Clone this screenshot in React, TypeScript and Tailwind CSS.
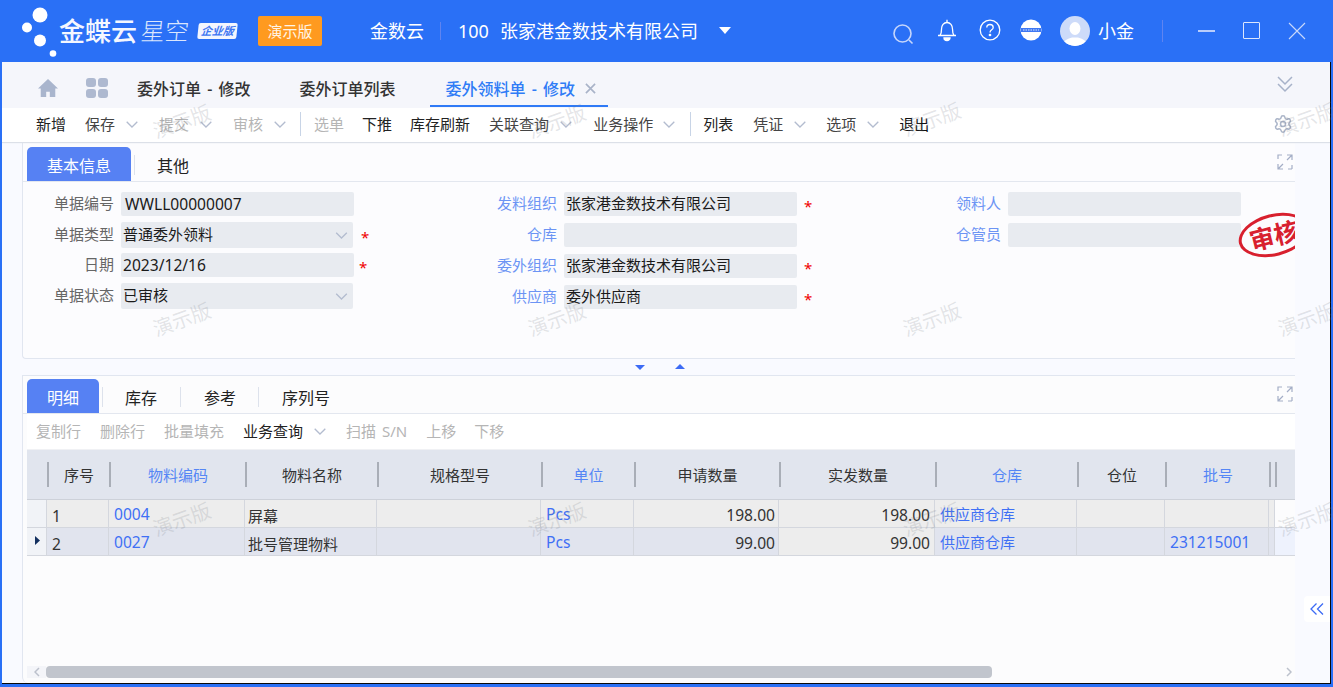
import React from "react";
import { Settings } from "lucide-react";

const FONT = "font-['Noto_Sans','Noto_Sans_CJK_SC',sans-serif]";
const GRID = "grid grid-cols-[20px_62px_136px_132px_164px_93px_145px_156px_142px_88px_104px_6px_20px]";
const LATIN = "text-[15.6px]";

function Chevron({ className = "" }: { className?: string }) {
  return (
    <svg viewBox="0 0 12 7" className={`w-[12px] h-[7px] shrink-0 ${className}`} fill="none" stroke="#b3bccf" strokeWidth="1.3">
      <polyline points="0.7,0.7 6,6 11.3,0.7" />
    </svg>
  );
}

function Expand({ className = "" }: { className?: string }) {
  return (
    <svg viewBox="0 0 16 16" className={`w-[16px] h-[16px] ${className}`} fill="none" stroke="#a3adc6" strokeWidth="1.2">
      <path d="M1 5V1h4M15 15v-4M15 15h-4" />
      <path d="M10 1h5v5M15 1l-5 5M1 10v5h5M1 15l5-5" />
    </svg>
  );
}

function Tool({ label, c = "text-[#222]", menu = false, m = "ml-[19px]", chevM = "ml-[11px]" }: { label: string; c?: string; menu?: boolean; m?: string; chevM?: string }) {
  return (
    <div className={`flex items-center shrink-0 ${m}`}>
      <span className={`text-[15px] leading-[20px] [word-spacing:2px] ${c}`}>{label}</span>
      {menu && <Chevron className={chevM} />}
    </div>
  );
}

function Field({ label, blue = false, value = "", select = false, star = false, inputX = "", h = "h-[24px]", w = "w-[233px]", starX = "ml-[7px]", top, starY = "mt-[4px]", valueCls = "text-[15px] mb-[2px]", pad = "pl-[2px]" }: { label: string; blue?: boolean; value?: string; select?: boolean; star?: boolean; inputX?: string; h?: string; w?: string; starX?: string; top: string; starY?: string; valueCls?: string; pad?: string }) {
  return (
    <div className={`flex items-center ${top}`}>
      <span className={`w-[91px] mb-[2px] text-right text-[15px] leading-[20px] shrink-0 ${blue ? "text-[#6c94f4]" : "text-[#666]"}`}>{label}</span>
      <div className={`ml-[7px] ${inputX} ${h} ${w} bg-[#e8ebf0] rounded-[2px] flex items-center justify-between ${pad} pr-[5px] shrink-0`}>
        <span className={`${valueCls} leading-[20px] text-[#1a1a1a]`}>{value}</span>
        {select && <Chevron className="w-[13px]" />}
      </div>
      {star && <span className={`${starX} ${starY} text-[15px] leading-[20px] text-[#f00000]`}>*</span>}
    </div>
  );
}

function Sep({ m = "" }: { m?: string }) {
  return <div className={`w-px h-[20px] bg-[#dde2ec] shrink-0 ${m}`} />;
}

function HeadCell({ label, blue = false }: { label?: string; blue?: boolean }) {
  return (
    <div className="relative flex items-center justify-center h-full pl-[2px]">
      <div className="absolute left-0 top-[12px] w-[2px] h-[25px] bg-[#a9aeb7]" />
      {label && <span className={`text-[15px] leading-[20px] ${blue ? "text-[#5586f5]" : "text-[#333]"}`}>{label}</span>}
    </div>
  );
}

function Cell({ children, bg = "bg-[#ededed]", c = "text-[#333]", align = "justify-start pl-[5px]", y = "pt-[5px]" }: { children?: React.ReactNode; bg?: string; c?: string; align?: string; y?: string }) {
  return (
    <div className={`flex items-center border-r border-[#d4d7de] text-[15px] leading-[20px] ${bg} ${c} ${align} ${y}`}>
      {children}
    </div>
  );
}

const MARKS = [
  "left-[152px] top-[108px]", "left-[527px] top-[108px]", "left-[902px] top-[106px]", "left-[1277px] top-[106px]",
  "left-[152px] top-[306px]", "left-[527px] top-[306px]", "left-[902px] top-[306px]", "left-[1277px] top-[306px]",
  "left-[152px] top-[506px]", "left-[527px] top-[506px]", "left-[902px] top-[506px]", "left-[1277px] top-[506px]",
];

export default function App() {
  const blue = "text-[#3f70f5]";
  const sel = "bg-[#e1e4ee]";
  const link = "pt-[1px]";
  const num = "pt-[3px]";
  const nameCol = "justify-start pl-[3px]";
  return (
    <div className={`relative w-[1333px] h-[687px] overflow-hidden flex flex-col bg-[#2a70f6] ${FONT}`}>
      {/* Title bar */}
      <header className="h-[62px] flex items-center shrink-0 text-white">
        <svg viewBox="0 0 59 62" className="w-[59px] h-[62px] shrink-0" fill="#fff">
          <circle cx="40" cy="15" r="7.5" />
          <circle cx="27" cy="27.5" r="5" />
          <circle cx="40" cy="40.5" r="6" />
          <circle cx="53" cy="53.5" r="3.3" />
        </svg>
        <span className="w-[78px] text-[26px] leading-[32px] font-medium text-[#f4f7ff] whitespace-nowrap">金蝶云</span>
        <span className="ml-[4px] w-[48px] text-[24px] leading-[32px] font-light -skew-x-6 text-[#dbe6fd] whitespace-nowrap">星空</span>
        <span className="ml-[9px] w-[39px] h-[16px] bg-[#f3f6fe] rounded-[2px] text-[#3f77f2] text-[11px] leading-[16px] font-bold italic text-center -skew-x-6 whitespace-nowrap">企业版</span>
        <div className="ml-[21px] w-[64px] h-[30px] bg-[#ff9a1f] rounded-[2px] flex items-center justify-center text-[15px] text-[#fff5e6]">演示版</div>
        <span className="ml-[48px] w-[54px] text-[18px] leading-[24px] whitespace-nowrap">金数云</span>
        <div className="ml-[16px] w-px h-[18px] bg-[#5f84f0]" />
        <span className="ml-[17px] w-[31px] text-[18px] leading-[24px]">100</span>
        <span className="ml-[11px] w-[198px] text-[18px] leading-[24px] whitespace-nowrap">张家港金数技术有限公司</span>
        <svg viewBox="0 0 12 7" className="ml-[21px] w-[12px] h-[7px] -mt-[1px]" fill="#fff"><path d="M0 0h12L6 7z" /></svg>

        <div className="flex-1" />

        <svg viewBox="0 0 24 24" className="w-[24px] h-[24px] mt-[5px]" fill="none" stroke="#c6d6fb" strokeWidth="1.6">
          <circle cx="11.5" cy="11.5" r="8.5" />
          <path d="M18 18l3.5 3.5" />
        </svg>
        <svg viewBox="0 0 22 24" className="ml-[21px] w-[22px] h-[24px] -mt-[2px]" fill="none" stroke="#fff" strokeWidth="1.3">
          <path d="M2 17.5h18M4 17.5c1.6-2 1.5-3.5 1.5-6.5 0-3.5 2.2-6.5 5.5-6.5s5.5 3 5.5 6.5c0 3 0 4.500 1.500 6.500" />
          <path d="M11 1.800v2.500" />
          <path d="M8 20h6a3 2.500 0 0 1-6 0z" fill="#fff" />
        </svg>
        <svg viewBox="0 0 22 22" className="ml-[21px] w-[22px] h-[22px] -mt-[2px]" fill="none" stroke="#fff" strokeWidth="1.3">
          <circle cx="11" cy="11" r="9.800" />
          <path d="M7.800 8.500c0-2 1.400-3 3.200-3s3.200 1.200 3.200 2.900c0 2.500-3.200 2.300-3.200 5" />
          <circle cx="11" cy="16" r="0.700" fill="#fff" />
        </svg>
        <svg viewBox="0 0 22 22" className="ml-[19px] w-[22px] h-[22px] -mt-[2px]">
          <circle cx="11" cy="11" r="10.500" fill="#fff" />
          <rect x="1" y="9" width="20" height="4" fill="#3f78f3" />
          <path d="M3 11h16" stroke="#a9c3fa" strokeWidth="1.500" strokeDasharray="1.500 1" />
        </svg>
        <svg viewBox="0 0 30 30" className="ml-[18px] w-[30px] h-[30px]">
          <clipPath id="av"><circle cx="15" cy="15" r="15" /></clipPath>
          <g clipPath="url(#av)">
            <rect width="30" height="30" fill="#cddbf9" />
            <ellipse cx="15" cy="12.500" rx="5.500" ry="6.500" fill="#fff" />
            <path d="M3 30c0-6 5-7 9-8.500h6c4 1.500 9 2.500 9 8.500z" fill="#fff" />
          </g>
        </svg>
        <span className="ml-[8px] w-[36px] text-[18px] leading-[24px] whitespace-nowrap">小金</span>
        <div className="ml-[28px] w-px h-[22px] bg-[#5f84f0]" />
        <div className="ml-[35px] w-[17px] h-[2px] bg-[#b9cdfb] -mt-[1px]" />
        <div className="ml-[28px] w-[17px] h-[17px] border border-[#dce6fd] rounded-[1px] -mt-[1px]" />
        <svg viewBox="0 0 18 18" className="ml-[28px] w-[18px] h-[18px] -mt-[1px]" fill="none" stroke="#c9d8fb" strokeWidth="1.100">
          <path d="M1 1l16 16M17 1L1 17" />
        </svg>
        <div className="w-[27px] shrink-0" />
      </header>

      {/* Window body */}
      <main className="relative ml-[2px] mr-[2px] mb-[3px] flex-1 min-h-0 flex flex-col bg-[#f9faff] border-r border-b border-[#0a0a0a] overflow-hidden">
        {/* Page tabs */}
        <div className="h-[46px] bg-[#f5f6fb] flex items-start shrink-0">
          <svg viewBox="0 0 24 22" className="ml-[35px] mt-[16px] w-[22px] h-[20px] shrink-0" fill="#a9b5cd">
            <path d="M12 1L1 11.500h3V21h6v-6h4v6h6v-9.500h3z" />
          </svg>
          <div className="ml-[27px] mt-[16px] w-[22px] h-[20px] grid grid-cols-2 gap-[2px] shrink-0">
            <div className="bg-[#aeb9d0] rounded-[3px]" />
            <div className="bg-[#aeb9d0] rounded-[3px]" />
            <div className="bg-[#aeb9d0] rounded-[3px]" />
            <div className="bg-[#aeb9d0] rounded-[3px]" />
          </div>
          <span className="ml-[29px] mt-[15px] text-[16px] leading-[24px] font-medium text-[#333] [word-spacing:2px] whitespace-nowrap">委外订单 - 修改</span>
          <span className="ml-[49px] mt-[15px] text-[16px] leading-[24px] font-medium text-[#333] whitespace-nowrap">委外订单列表</span>
          <div className="ml-[35px] w-[178px] h-[46px] border-b-[2px] border-[#2f7af6] mt-[-1px] flex items-start pl-[15px] shrink-0">
            <span className="mt-[16px] text-[16px] leading-[24px] font-medium text-[#2f7cf6] [word-spacing:2px] whitespace-nowrap">委外领料单 - 修改</span>
            <svg viewBox="0 0 12 12" className="ml-[10px] mt-[22px] w-[11px] h-[11px]" fill="none" stroke="#a9b3c8" strokeWidth="1.800">
              <path d="M1 1l10 10M11 1L1 11" />
            </svg>
          </div>
          <div className="flex-1" />
          <svg viewBox="0 0 18 18" className="mt-[13px] mr-[36px] w-[18px] h-[18px]" fill="none" stroke="#a7b2c9" strokeWidth="1.500">
            <path d="M2 2l7 7 7-7M2 9l7 7 7-7" />
          </svg>
        </div>

        {/* Toolbar */}
        <div className="h-[34px] bg-white flex items-center pl-[34px] pb-[2px] shrink-0 shadow-[0_1px_1px_#dce0e8] z-[1]">
          <Tool label="新增" m="ml-0" />
          <Tool label="保存" c="text-[#444]" menu />
          <Tool label="提交" c="text-[#b5b5b5]" menu m="ml-[21px]" />
          <Tool label="审核" c="text-[#b5b5b5]" menu m="ml-[21px]" />
          <div className="ml-[14px] w-px h-[24px] bg-[#c8d4e6]" />
          <Tool label="选单" c="text-[#b5b5b5]" m="ml-[13px]" />
          <Tool label="下推" m="ml-[18px]" />
          <Tool label="库存刷新" m="ml-[18px]" />
          <Tool label="关联查询" c="text-[#444]" menu />
          <Tool label="业务操作" c="text-[#444]" menu m="ml-[21px]" chevM="ml-[10px]" />
          <div className="ml-[15px] w-px h-[24px] bg-[#c8d4e6]" />
          <Tool label="列表" c="text-[#222]" m="ml-[12px]" />
          <Tool label="凭证" c="text-[#444]" menu m="ml-[20px]" />
          <Tool label="选项" c="text-[#444]" menu m="ml-[20px]" />
          <Tool label="退出" c="text-[#111]" m="ml-[20px]" />
          <div className="flex-1" />
          <Settings className="mr-[37px] w-[20px] h-[20px] text-[#aab4c8]" strokeWidth={1.8} />
        </div>

        {/* Header form panel */}
        <section className="relative ml-[20px] mt-[1px] w-[1273px] h-[216px] bg-[#fcfcfe] border-l border-b border-[#e1e6f0] rounded-bl-[4px] shrink-0 overflow-hidden">
          <div className="h-[39px] flex items-end pl-[4px] border-b border-[#e3e7ef]">
            <div className="w-[104px] h-[34px] pt-[4px] bg-[#5681f3] rounded-t-[5px] flex items-center justify-center text-[16px] text-white">基本信息</div>
            <Sep m="ml-[3px] mb-[6px]" />
            <span className="ml-[22px] mb-[3px] text-[16px] leading-[24px] text-[#222]">其他</span>
          </div>
          <Expand className="absolute right-[2px] top-[11px]" />
          <div className="flex">
            <div className="w-[443px] shrink-0">
              <Field top="mt-[10px]" label="单据编号" value="WWLL00000007" valueCls={LATIN} pad="pl-[4px]" />
              <Field top="mt-[6px]" label="单据类型" value="普通委外领料" select star h="h-[26px]" w="w-[232px]" inputX="-ml-[1px]" starX="ml-[8px]" />
              <Field top="mt-[5px]" label="日期" value="2023/12/16" valueCls={LATIN} star w="w-[233px]" inputX="-ml-[2px]" starX="ml-[5px]" />
              <Field top="mt-[6px]" label="单据状态" value="已审核" select h="h-[26px]" w="w-[232px]" />
            </div>
            <div className="w-[444px] shrink-0">
              <Field top="mt-[10px]" label="发料组织" blue value="张家港金数技术有限公司" star />
              <Field top="mt-[7px]" label="仓库" blue />
              <Field top="mt-[7px]" label="委外组织" blue value="张家港金数技术有限公司" star />
              <Field top="mt-[7px]" label="供应商" blue value="委外供应商" star />
            </div>
            <div className="flex-1">
              <Field top="mt-[10px]" label="领料人" blue />
              <Field top="mt-[7px]" label="仓管员" blue />
            </div>
          </div>
          {/* Stamp */}
          <div className="absolute left-[1215px] top-[71px] w-[72px] h-[42px] rounded-[50%] border-[3px] border-[#d8202e] -rotate-[14deg] flex items-center justify-center bg-transparent">
            <span className="text-[25px] leading-[30px] font-bold text-[#d8202e] whitespace-nowrap">审核</span>
          </div>
        </section>

        {/* Splitter */}
        <div className="h-[16px] shrink-0 flex items-center pl-[633px]">
          <svg viewBox="0 0 10 5" className="w-[10px] h-[5px]" fill="#3d6bf5"><path d="M0 0h10L5 5z" /></svg>
          <svg viewBox="0 0 10 5" className="ml-[30px] w-[10px] h-[5px] -mt-[1px]" fill="#3d6bf5"><path d="M5 0l5 5H0z" /></svg>
        </div>

        {/* Detail panel */}
        <section className="relative ml-[20px] w-[1273px] flex-1 min-h-0 bg-[#fcfcfd] border-l border-t border-[#e1e6f0] rounded-bl-[6px] flex flex-col overflow-hidden">
          <div className="h-[38px] shrink-0 flex items-end pl-[4px] border-b border-[#e3e7ef]">
            <div className="w-[72px] h-[34px] pt-[4px] bg-[#5681f3] rounded-t-[5px] flex items-center justify-center text-[16px] text-white">明细</div>
            <Sep m="ml-[3px] mb-[6px]" />
            <span className="ml-[22px] mb-[3px] text-[16px] leading-[24px] text-[#222]">库存</span>
            <Sep m="ml-[23px] mb-[6px]" />
            <span className="ml-[23px] mb-[3px] text-[16px] leading-[24px] text-[#222]">参考</span>
            <Sep m="ml-[22px] mb-[6px]" />
            <span className="ml-[23px] mb-[3px] text-[16px] leading-[24px] text-[#222]">序列号</span>
          </div>
          <Expand className="absolute right-[2px] top-[10px]" />

          <div className="ml-[4px] flex-1 min-h-0 flex flex-col">
            <div className="h-[36px] pb-[1px] shrink-0 bg-white border-b border-[#f0f1f4] flex items-center pl-[9px]">
              <Tool label="复制行" c="text-[#b5b5b5]" m="ml-0" />
              <Tool label="删除行" c="text-[#b5b5b5]" />
              <Tool label="批量填充" c="text-[#b5b5b5]" />
              <Tool label="业务查询" c="text-[#222]" menu />
              <Tool label="扫描 S/N" c="text-[#b5b5b5]" m="ml-[20px]" />
              <Tool label="上移" c="text-[#b5b5b5]" />
              <Tool label="下移" c="text-[#b5b5b5]" m="ml-[18px]" />
            </div>

            <div className={`${GRID} h-[50px] shrink-0 bg-[#e1e5ee] border-b border-[#cdd1d9]`}>
              <div />
              <HeadCell label="序号" />
              <HeadCell label="物料编码" blue />
              <HeadCell label="物料名称" />
              <HeadCell label="规格型号" />
              <HeadCell label="单位" blue />
              <HeadCell label="申请数量" />
              <HeadCell label="实发数量" />
              <HeadCell label="仓库" blue />
              <HeadCell label="仓位" />
              <HeadCell label="批号" blue />
              <HeadCell />
              <HeadCell />
            </div>

            <div className={`${GRID} h-[28px] shrink-0 border-b border-[#d4d7de]`}>
              <div className="bg-[#f1f3f7] border-r border-[#d4d7de]" />
              <Cell><span className={LATIN}>1</span></Cell>
              <Cell c={blue} y={link}><span className={LATIN}>0004</span></Cell>
              <Cell align={nameCol}>屏幕</Cell>
              <Cell />
              <Cell c={blue} y={link}><span className={LATIN}>Pcs</span></Cell>
              <Cell align="justify-end pr-[3px]" y={num}><span className={LATIN}>198.00</span></Cell>
              <Cell align="justify-end pr-[4px]" y={num}><span className={LATIN}>198.00</span></Cell>
              <Cell c={blue} y={link}>供应商仓库</Cell>
              <Cell />
              <Cell />
              <Cell />
              <div />
            </div>
            <div className={`${GRID} h-[28px] shrink-0 border-b border-[#d4d7de]`}>
              <div className="bg-[#f1f3f7] border-r border-[#d4d7de] flex items-center pl-[8px]">
                <svg viewBox="0 0 5 9" className="w-[5px] h-[9px] -mt-[2px]" fill="#14305f"><path d="M0 0l5 4.500L0 9z" /></svg>
              </div>
              <Cell bg={sel}><span className={LATIN}>2</span></Cell>
              <Cell bg={sel} c={blue} y={link}><span className={LATIN}>0027</span></Cell>
              <Cell bg={sel} align={nameCol}>批号管理物料</Cell>
              <Cell bg={sel} />
              <Cell bg={sel} c={blue} y={link}><span className={LATIN}>Pcs</span></Cell>
              <Cell bg={sel} align="justify-end pr-[3px]" y={num}><span className={LATIN}>99.00</span></Cell>
              <Cell align="justify-end pr-[4px]" y={num}><span className={LATIN}>99.00</span></Cell>
              <Cell bg={sel} c={blue} y={link}>供应商仓库</Cell>
              <Cell bg={sel} />
              <Cell bg={sel} c={blue} y={link}><span className={LATIN}>231215001</span></Cell>
              <Cell bg={sel} />
              <div className="bg-[#eef2fd]" />
            </div>

            <div className="flex-1" />

            {/* Horizontal scrollbar */}
            <div className="h-[12px] mb-[5px] shrink-0 flex items-center">
              <div className="w-[19px] h-[12px] bg-[#f4f5f9] flex items-center justify-center">
                <svg viewBox="0 0 6 10" className="w-[6px] h-[10px]" fill="none" stroke="#bcc1cc" strokeWidth="1.500"><path d="M5 1L1 5l4 4" /></svg>
              </div>
              <div className="w-[946px] h-[12px] bg-[#c1c5cd] rounded-[4px]" />
              <div className="flex-1" />
              <svg viewBox="0 0 6 10" className="mr-[3px] w-[6px] h-[10px]" fill="none" stroke="#bcc1cc" strokeWidth="1.500"><path d="M1 1l4 4-4 4" /></svg>
            </div>
          </div>
        </section>

        {/* Side collapse button */}
        <div className="absolute right-0 top-[534px] w-[26px] h-[26px] bg-white rounded-l-[4px] flex items-center justify-center">
          <svg viewBox="0 0 14 12" className="w-[14px] h-[12px]" fill="none" stroke="#3d6bf5" strokeWidth="1.300">
            <path d="M6.500 0.500L1 6l5.500 5.500M13 0.500L7.500 6l5.500 5.500" />
          </svg>
        </div>
      </main>

      {/* Watermark */}
      {MARKS.map((m, i) => (
        <span key={i} className={`absolute z-10 ${m} w-[60px] text-center text-[20px] leading-[28px] text-[rgba(120,125,135,0.2)] -rotate-[20deg] pointer-events-none whitespace-nowrap`}>
          演示版
        </span>
      ))}
    </div>
  );
}
